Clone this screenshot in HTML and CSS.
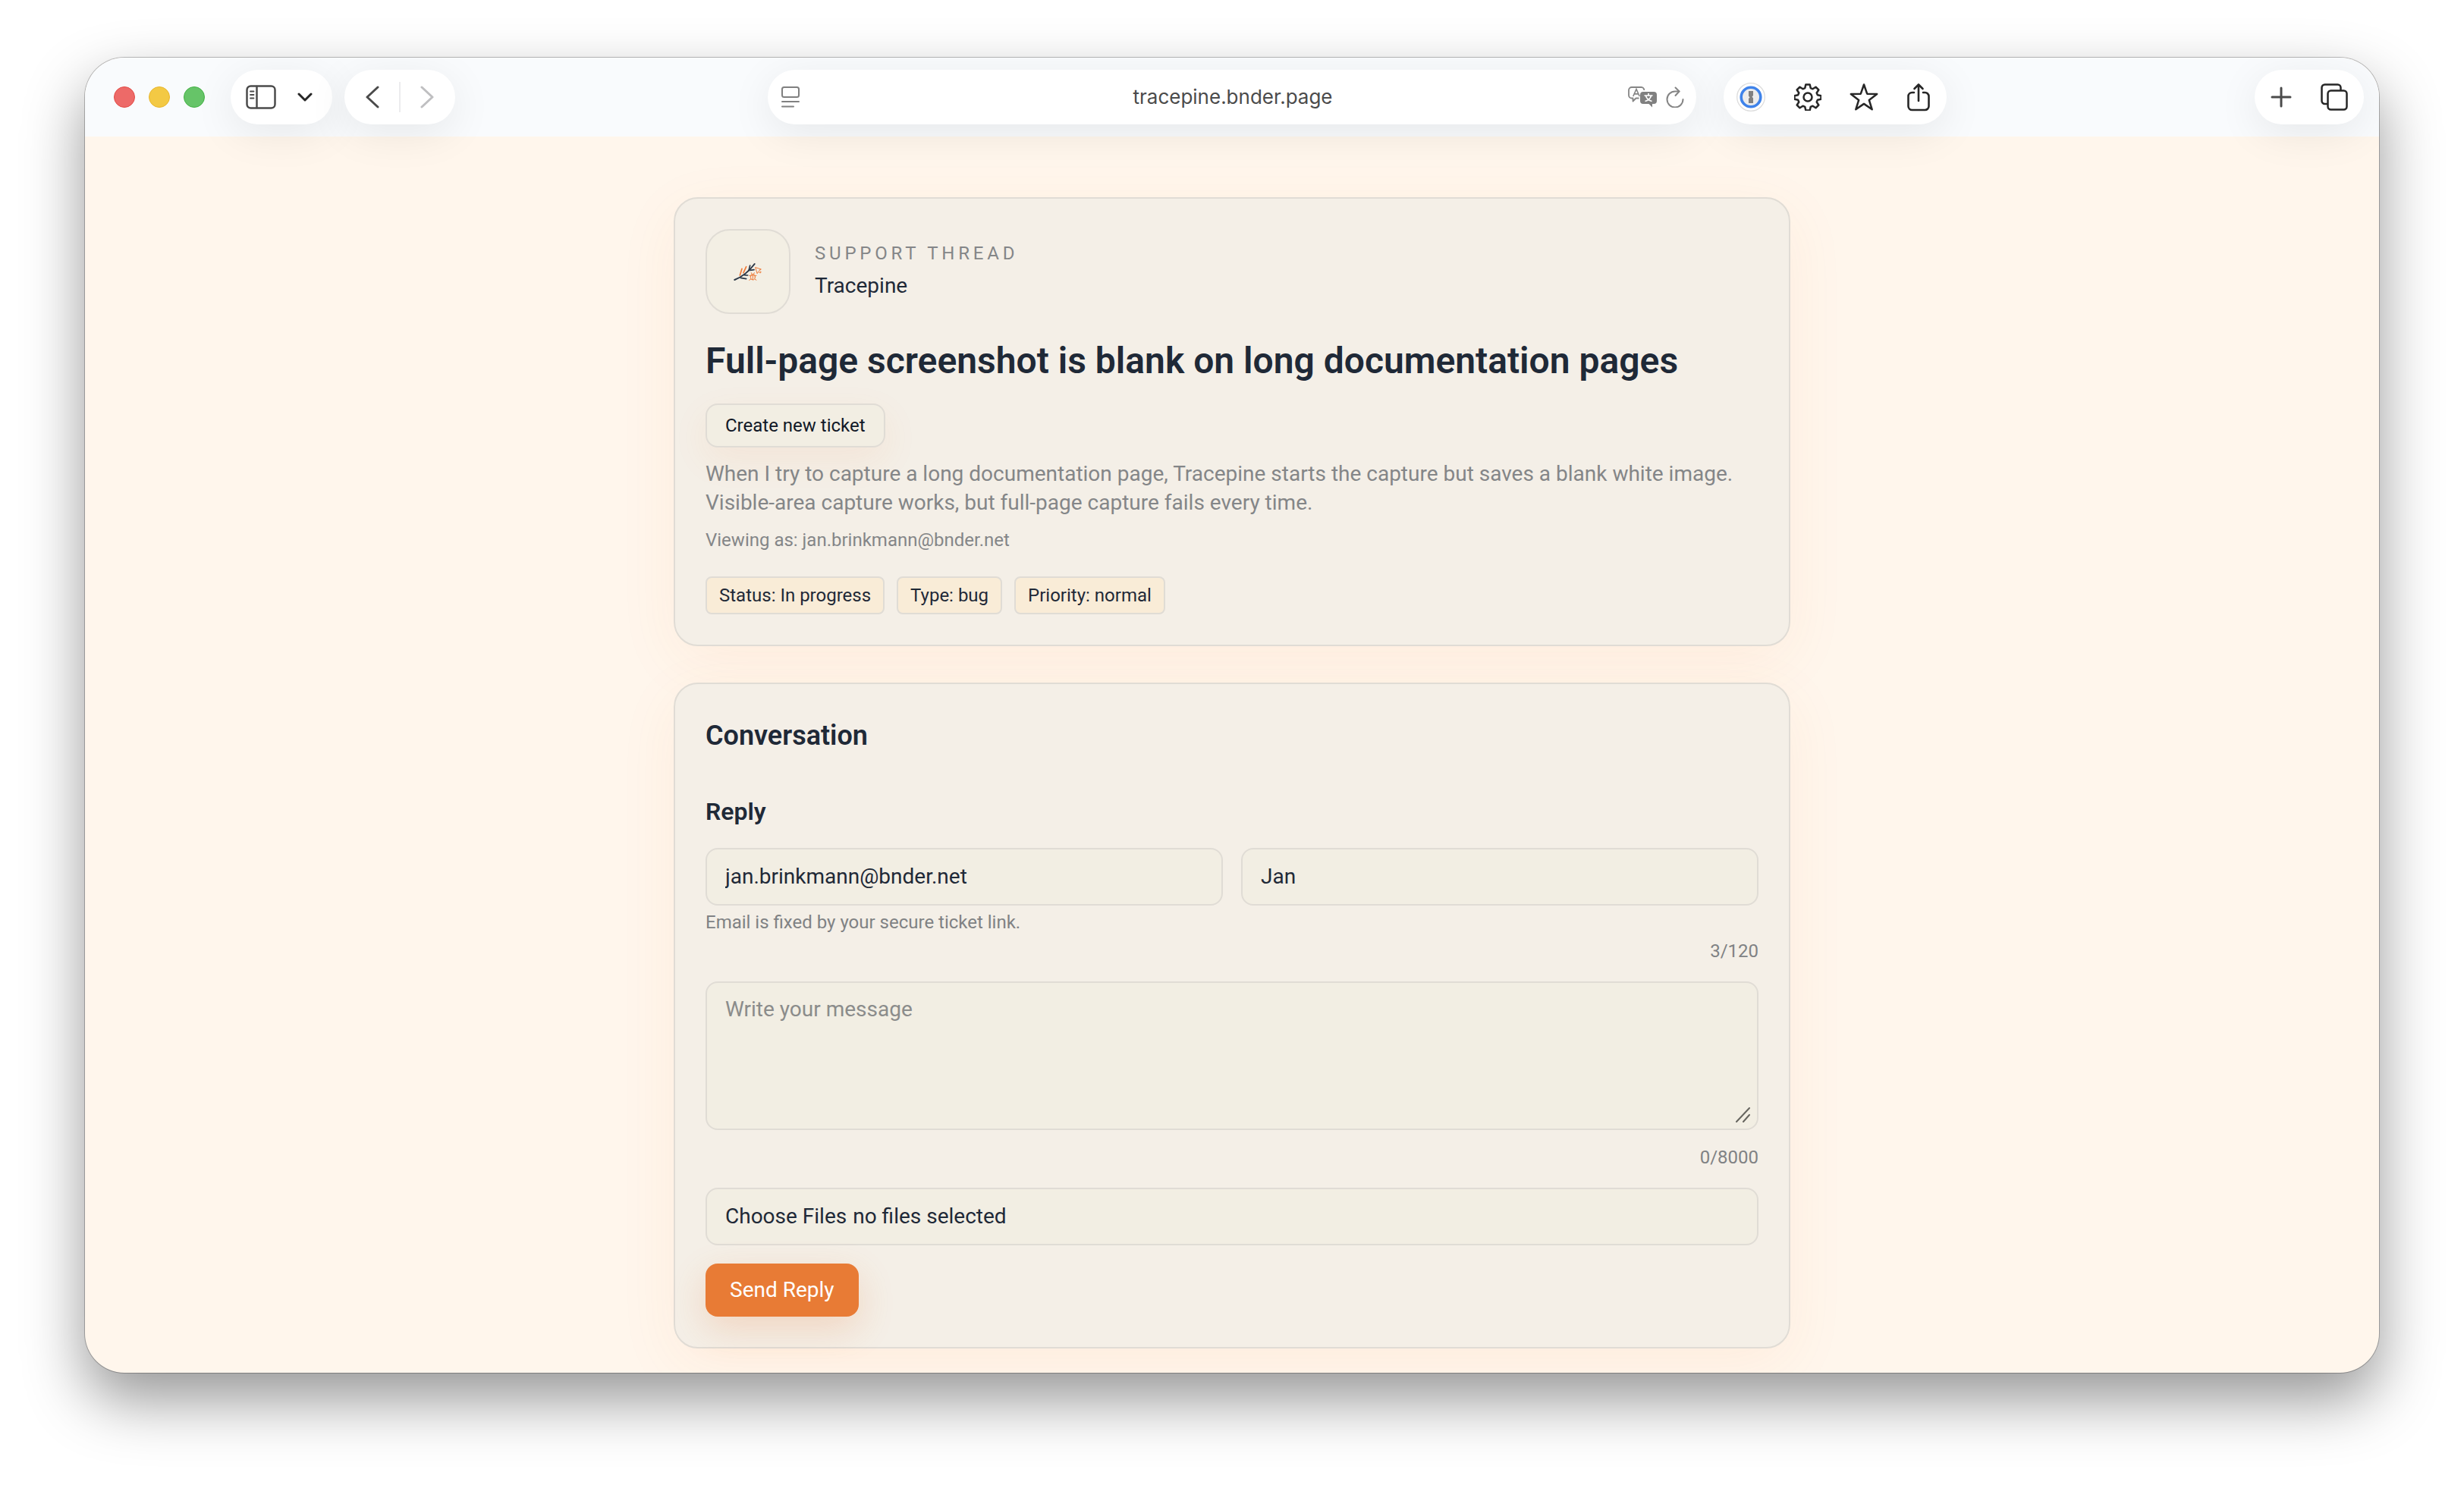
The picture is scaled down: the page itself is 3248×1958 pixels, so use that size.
FILE: index.html
```html
<!DOCTYPE html>
<html lang="en">
<head>
    <meta charset="UTF-8">
    <meta name="viewport" content="width=device-width, initial-scale=1.0">
    <title>Tracepine - Support Thread</title>
    <link rel="stylesheet" href="styles.css">
</head>
<body>
    <div class="window">
        <header class="toolbar">
            <div class="toolbar-left">
                <div class="lights">
                    <button class="light light-close" aria-label="Close"></button>
                    <button class="light light-minimize" aria-label="Minimize"></button>
                    <button class="light light-zoom" aria-label="Zoom"></button>
                </div>
                <div class="pill pill-sidebar">
                    <button class="tool" aria-label="Show sidebar">
                        <svg width="40" height="32" viewBox="0 0 40 32" fill="none" stroke="#4b4b4b" stroke-width="2.5" stroke-linecap="round">
                            <rect x="1.5" y="1.5" width="37" height="29" rx="5"/>
                            <path d="M14.5 2v28"/>
                            <path d="M6 8.5h4.5M6 13h4.5M6 17.5h4.5" stroke-width="1.8"/>
                        </svg>
                    </button>
                    <button class="tool" aria-label="Tab groups">
                        <svg width="20" height="12" viewBox="0 0 20 12" fill="none" stroke="#262626" stroke-width="3" stroke-linecap="round" stroke-linejoin="round">
                            <path d="M2 2l8 8 8-8"/>
                        </svg>
                    </button>
                </div>
                <div class="pill pill-nav">
                    <button class="tool" aria-label="Back">
                        <svg width="18" height="30" viewBox="0 0 18 30" fill="none" stroke="#4b4b4b" stroke-width="3" stroke-linecap="round" stroke-linejoin="round">
                            <path d="M16 2L2 15l14 13"/>
                        </svg>
                    </button>
                    <span class="divider"></span>
                    <button class="tool" aria-label="Forward">
                        <svg width="18" height="30" viewBox="0 0 18 30" fill="none" stroke="#bfbfc1" stroke-width="3" stroke-linecap="round" stroke-linejoin="round">
                            <path d="M2 2l14 13L2 28"/>
                        </svg>
                    </button>
                </div>
            </div>

            <div class="pill pill-url">
                <button class="tool" aria-label="Page menu">
                    <svg width="24" height="28" viewBox="0 0 24 28" fill="none" stroke="#808080" stroke-width="2" stroke-linecap="round">
                        <rect x="1" y="1" width="22" height="13" rx="2.5"/>
                        <path d="M1 20h22M1 26.5h15"/>
                    </svg>
                </button>
                <input class="url" type="text" aria-label="Address" value="tracepine.bnder.page">
                <button class="tool" aria-label="Translate">
                    <svg width="38" height="28" viewBox="0 0 38 28">
                        <path d="M14.500 15.500H10.500L6.500 19.500V15.500H5A4 4 0 0 1 1 11.500V5A4 4 0 0 1 5 1H17.500A4 4 0 0 1 21.300 5" fill="none" stroke="#858585" stroke-width="1.8" stroke-linejoin="round"/>
                        <path d="M6.800 13L11 3.500l4.200 9.500M8.300 9.800h5.400" fill="none" stroke="#858585" stroke-width="1.7"/>
                        <path d="M20 7h14a4 4 0 0 1 4 4v8a4 4 0 0 1-4 4h-2v4.500L27.500 23H20a4 4 0 0 1-4-4v-8a4 4 0 0 1 4-4z" fill="#808080"/>
                        <path d="M27 9v3M21.500 12h11M23.500 12.500c1 3 4 6 8 7M30.500 12.500c-1 3-4 6-8 7" fill="none" stroke="#fff" stroke-width="1.7"/>
                    </svg>
                </button>
                <button class="tool" aria-label="Reload">
                    <svg width="24" height="28" viewBox="0 0 24 28" fill="none" stroke="#858585" stroke-width="2" stroke-linecap="round" stroke-linejoin="round">
                        <path d="M17.500 6.500H12A10.500 10.500 0 1 0 22.500 17"/>
                        <path d="M12.500 1.500l5 5-5 5.500"/>
                    </svg>
                </button>
            </div>

            <div class="toolbar-right">
                <div class="pill pill-actions">
                    <button class="tool" aria-label="1Password">
                        <svg width="38" height="38" viewBox="0 0 38 38">
                            <circle cx="19" cy="19" r="18.3" fill="#fff" stroke="#dcdcdc" stroke-width="1.3"/>
                            <circle cx="19" cy="19" r="12.8" fill="#ececec" stroke="#3f83ea" stroke-width="3.6"/>
                            <path d="M16 11h6v6l-1.500 1.500L22 20.500V27h-6v-6l1.500-1.500L16 17.500z" fill="#808080"/>
                        </svg>
                    </button>
                    <button class="tool" aria-label="Settings">
                        <svg width="36" height="36" viewBox="0 0 36 36" fill="none" stroke="#262626" stroke-width="2.5" stroke-linejoin="round">
                            <path d="M15.300 1.500h5.400l1 4.600 2.800 1.200 4-2.600 3.800 3.800-2.600 4 1.200 2.800 4.600 1v4.400l-4.600 1-1.200 2.800 2.600 4-3.800 3.800-4-2.600-2.800 1.200-1 4.600h-5.400l-1-4.600-2.800-1.200-4 2.600-3.800-3.800 2.600-4-1.200-2.800-4.600-1v-4.400l4.600-1 1.200-2.800-2.600-4 3.800-3.800 4 2.600 2.800-1.200z"/>
                            <circle cx="18" cy="18" r="5.5"/>
                        </svg>
                    </button>
                    <button class="tool" aria-label="Bookmark">
                        <svg width="38" height="38" viewBox="0 0 38 38" fill="none" stroke="#262626" stroke-width="2.5" stroke-linejoin="round">
                            <path d="M19 2.500l4.200 12.200 13 .3-10.400 7.900 3.900 12.400L19 27.900 8.300 35.300l3.900-12.400L1.800 15l13-.3z"/>
                        </svg>
                    </button>
                    <button class="tool" aria-label="Share">
                        <svg width="30" height="38" viewBox="0 0 30 38" fill="none" stroke="#262626" stroke-width="2.6" stroke-linecap="round" stroke-linejoin="round">
                            <path d="M9 13H6.500A5 5 0 0 0 1.500 18V31A5 5 0 0 0 6.500 36H23.500A5 5 0 0 0 28.500 31V18A5 5 0 0 0 23.500 13H21"/>
                            <path d="M15 24V2.500M9.500 8L15 2.500 20.500 8"/>
                        </svg>
                    </button>
                </div>
                <div class="pill pill-tabs">
                    <button class="tool" aria-label="New tab">
                        <svg width="28" height="28" viewBox="0 0 28 28" fill="none" stroke="#4b4b4b" stroke-width="3" stroke-linecap="round">
                            <path d="M14 2v24M2 14h24"/>
                        </svg>
                    </button>
                    <button class="tool" aria-label="Tab overview">
                        <svg width="36" height="36" viewBox="0 0 36 36" fill="none" stroke="#262626" stroke-width="2.5" stroke-linejoin="round">
                            <path d="M9 27H5.500A4 4 0 0 1 1.500 23V5.500A4 4 0 0 1 5.500 1.500H22.500A4 4 0 0 1 26.500 5.500V9"/>
                            <rect x="9.5" y="9.5" width="25" height="25" rx="4"/>
                        </svg>
                    </button>
                </div>
            </div>
        </header>

        <main class="page">
            <section class="card">
                <div class="brand">
                    <div class="brand-logo">
                        <svg width="38" height="24" viewBox="80 76 114 72" fill="none" stroke-linecap="round">
                            <g stroke="#ee7a38" stroke-width="5">
                                <path d="M105 127l8-26M119 117l11-24"/>
                            </g>
                            <g stroke="#2b3747" stroke-width="5">
                                <path d="M84 145c30-12 56-32 79-63" stroke-width="6"/>
                                <path d="M140 108l5-20M146 107l15-2M122 126l14 1M108 137l22 4"/>
                            </g>
                            <g stroke="#ee7a38" stroke-width="3">
                                <ellipse cx="156" cy="134" rx="9" ry="11"/>
                                <path d="M148 127h16M156 127v17M150 117l3 6M162 117l-3 6M142 128l5 2M142 146l6-4M170 128l-5 2M170 146l-6-4"/>
                                <path d="M167 96l22 7-8 4 8 8-4 3-7-6-4 7z"/>
                            </g>
                        </svg>
                    </div>
                    <div class="brand-text">
                        <p class="eyebrow">Support Thread</p>
                        <p class="brand-name">Tracepine</p>
                    </div>
                </div>
                <h1>Full-page screenshot is blank on long documentation pages</h1>
                <button class="button-secondary" type="button">Create new ticket</button>
                <p class="description">When I try to capture a long documentation page, Tracepine starts the capture but saves a blank white image. Visible-area capture works, but full-page capture fails every time.</p>
                <p class="viewing">Viewing as: jan.brinkmann@bnder.net</p>
                <div class="badges">
                    <span class="badge">Status: In progress</span>
                    <span class="badge">Type: bug</span>
                    <span class="badge">Priority: normal</span>
                </div>
            </section>

            <section class="card">
                <h2>Conversation</h2>
                <form class="reply-form">
                    <h3>Reply</h3>
                    <div class="field-row">
                        <input class="field" type="email" aria-label="Email" value="jan.brinkmann@bnder.net" readonly>
                        <input class="field" type="text" aria-label="Name" value="Jan" maxlength="120">
                    </div>
                    <p class="hint">Email is fixed by your secure ticket link.</p>
                    <p class="hint counter">3/120</p>
                    <div class="message">
                        <textarea class="field" aria-label="Message" placeholder="Write your message" maxlength="8000"></textarea>
                        <svg class="grip" width="20" height="20" viewBox="0 0 20 20" stroke="#66655f" stroke-width="2" stroke-linecap="round">
                            <path d="M1 19L18 1M10 19l8-9"/>
                        </svg>
                    </div>
                    <p class="hint counter counter-message">0/8000</p>
                    <label class="field file-field">
                        <input class="file-input" type="file" multiple>
                        <span>Choose Files</span>
                        <span>no files selected</span>
                    </label>
                    <button class="button-primary" type="submit">Send Reply</button>
                </form>
            </section>
        </main>
    </div>
</body>
</html>
```
FILE: styles.css
```css
* {
    box-sizing: border-box;
}

body {
    margin: 0;
    min-height: 100vh;
    padding: 76px 112px 148px;
    display: flex;
    flex-direction: column;
    background: #fff;
    font-family: Roboto, sans-serif;
    font-size: 28px;
    line-height: 38px;
    color: #1f2937;
}

h1, h2, h3, p {
    margin: 0;
}

button, input, textarea {
    font: inherit;
    color: inherit;
}

button {
    border: none;
    background: none;
    padding: 0;
    cursor: pointer;
}

/* Browser window */
.window {
    flex: 1;
    border-radius: 52px;
    overflow: hidden;
    background: #fff6ec;
    box-shadow: 0 0 0 1px rgba(0, 0, 0, 0.25), 0 36px 80px rgba(0, 0, 0, 0.41);
}

.toolbar {
    position: relative;
    z-index: 1;
    display: grid;
    grid-template-columns: 1fr minmax(0, 1224px) 1fr;
    gap: 36px;
    padding: 16px 20px;
    background: #f9fbfd;
}

.toolbar-left {
    display: flex;
    align-items: center;
    gap: 16px;
    padding-left: 18px;
}

.toolbar-right {
    display: flex;
    justify-content: space-between;
}

.lights {
    display: flex;
    gap: 18px;
    margin-right: 18px;
}

.light {
    width: 28px;
    height: 28px;
    border-radius: 50%;
    border: 1px solid;
}

.light-close {
    background: #ed6a68;
    border-color: #e24b47;
}

.light-minimize {
    background: #f3c944;
    border-color: #e8b62e;
}

.light-zoom {
    background: #66c468;
    border-color: #45b147;
}

.pill {
    height: 72px;
    border-radius: 36px;
    background: #fff;
    display: flex;
    align-items: center;
    justify-content: space-between;
    box-shadow: 0 12px 56px rgba(0, 0, 0, 0.08);
}

.tool {
    display: flex;
}

.pill-sidebar {
    width: 134px;
    padding: 0 26px 0 20px;
}

.pill-nav {
    width: 146px;
    padding: 0 28px;
}

.divider {
    width: 2px;
    height: 40px;
    background: #ececee;
}

.pill-url {
    padding: 0 16px 0 18px;
    gap: 12px;
}

.url {
    flex: 1;
    min-width: 0;
    border: none;
    outline: none;
    background: none;
    padding: 0 0 0 50px;
    text-align: center;
    font-family: Inter, sans-serif;
    font-size: 26px;
    color: #4b4b4b;
}

.pill-actions {
    width: 294px;
    padding: 0 22px 0 17px;
}

.pill-tabs {
    width: 144px;
    padding: 0 21px;
}

/* Page */
.page {
    max-width: 1536px;
    margin: 0 auto;
    padding: 80px 32px 32px;
    display: flex;
    flex-direction: column;
    gap: 48px;
}

.card {
    padding: 40px;
    border: 2px solid #e0dcd5;
    border-radius: 32px;
    background: #f4efe7;
    box-shadow: 0 20px 80px rgba(240, 120, 40, 0.07);
}

.brand {
    display: flex;
    align-items: center;
    gap: 32px;
}

.brand-logo {
    width: 112px;
    height: 112px;
    border: 2px solid #e0dcd5;
    border-radius: 32px;
    background: #f3efe4;
    display: flex;
    align-items: center;
    justify-content: center;
}

.brand-text {
    display: flex;
    flex-direction: column;
    gap: 8px;
    padding-bottom: 2px;
}

.eyebrow {
    font-size: 24px;
    line-height: 32px;
    letter-spacing: 0.2em;
    text-transform: uppercase;
    color: #848688;
}

h1 {
    margin-top: 32px;
    font-size: 48px;
    line-height: 60px;
    font-weight: 600;
}

h2 {
    font-size: 36px;
    line-height: 56px;
    font-weight: 600;
}

h3 {
    margin-bottom: 24px;
    font-size: 32px;
    line-height: 48px;
    font-weight: 600;
}

.button-secondary {
    margin-top: 26px;
    padding: 11px 24px;
    border: 2px solid #e0dcd5;
    border-radius: 16px;
    background: #f2eee3;
    font-size: 24px;
    line-height: 32px;
    color: #111827;
    box-shadow: 0 16px 48px rgba(240, 120, 40, 0.08);
}

.description {
    margin-top: 16px;
    color: #848688;
}

.viewing {
    margin-top: 14px;
    font-size: 24px;
    line-height: 32px;
    color: #848688;
}

.badges {
    display: flex;
    gap: 16px;
    margin-top: 32px;
}

.badge {
    padding: 7px 16px;
    border: 2px solid #e0dcd5;
    border-radius: 8px;
    background: #f9ecd7;
    font-size: 24px;
    line-height: 32px;
}

/* Reply form */
.reply-form {
    display: flex;
    flex-direction: column;
    align-items: stretch;
    margin-top: 48px;
}

.field-row {
    display: grid;
    grid-template-columns: 1fr 1fr;
    gap: 24px;
    margin-bottom: 6px;
}

.field {
    width: 100%;
    padding: 17px 24px;
    border: 2px solid #e0dcd5;
    border-radius: 16px;
    background: #f2eee3;
    outline: none;
}

.hint {
    font-size: 24px;
    line-height: 32px;
    color: #808284;
}

.counter {
    margin: 6px 0 24px;
    text-align: right;
}

.counter-message {
    margin-top: 20px;
}

.message {
    position: relative;
    display: flex;
}

.message .field {
    height: 196px;
    padding-top: 16px;
    resize: none;
}

.message .field::placeholder {
    color: #8b8c8b;
}

.grip {
    position: absolute;
    right: 10px;
    bottom: 10px;
}

.file-field {
    display: flex;
    gap: 8px;
    margin-bottom: 24px;
    cursor: pointer;
}

.file-input {
    position: absolute;
    width: 1px;
    height: 1px;
    opacity: 0;
}

.button-primary {
    align-self: flex-start;
    padding: 16px 32px;
    border-radius: 16px;
    background: #e87b35;
    color: #fff;
    box-shadow: 0 16px 48px rgba(232, 110, 40, 0.2);
}
```
